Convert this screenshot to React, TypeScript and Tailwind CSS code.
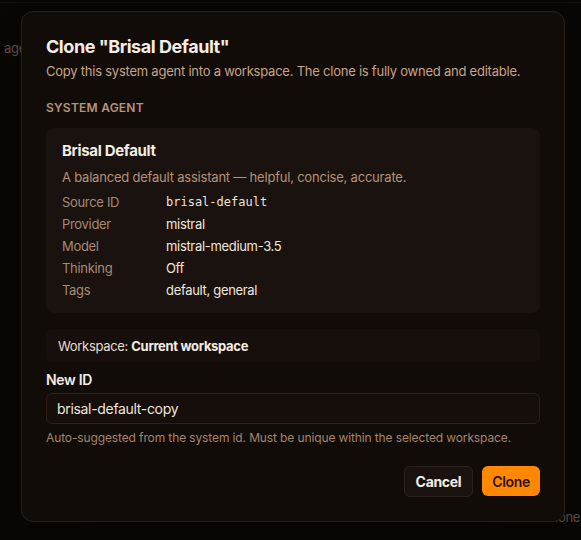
import React from "react";

const rows: { label: string; value: string; mono?: boolean }[] = [
  { label: "Source ID", value: "brisal-default", mono: true },
  { label: "Provider", value: "mistral" },
  { label: "Model", value: "mistral-medium-3.5" },
  { label: "Thinking", value: "Off" },
  { label: "Tags", value: "default, general" },
];

export default function App() {
  return (
    <div
      className="relative h-[540px] w-[581px] overflow-hidden bg-[#0a0604] tracking-[-0.02em] text-[#efe5db]"
      style={{ fontFamily: "Inter, 'Noto Sans', sans-serif" }}
    >
      {/* page behind the modal */}
      <div className="absolute inset-0">
        <div className="h-[3px] border-b border-[#17110d]" />
        <div className="absolute left-[4px] top-[38px] text-[13px] leading-[20px] text-[#5f4e42]">
          agent
        </div>
        <div className="absolute left-[546px] top-[507px] text-[13px] leading-[20px] text-[#5f4e42]">
          Clone
        </div>
      </div>

      {/* dialog */}
      <div className="absolute left-[21px] top-[11px] w-[544px] rounded-xl border border-[#2a201a] bg-[#120c09] p-6 shadow-2xl">
        <h2 className="text-[18px] font-bold leading-[22px] tracking-[-0.025em] text-[#f5ece3]">
          Clone "Brisal Default"
        </h2>
        <p className="mt-[3px] text-[13px] leading-[20px] tracking-[-0.018em] text-[#c6a488]">
          Copy this system agent into a workspace. The clone is fully owned and editable.
        </p>

        <div className="mt-[19px] text-[12px] font-semibold uppercase leading-[16px] tracking-[0.02em] text-[#b8937a]">
          System agent
        </div>

        <div className="mt-3 rounded-lg bg-[#1a120e] px-4 py-3">
          <div className="text-[15px] font-bold leading-[22px] text-[#f5ece3]">Brisal Default</div>
          <div className="mt-1 text-[13px] leading-[22px] tracking-[-0.016em] text-[#b59279]">
            A balanced default assistant — helpful, concise, accurate.
          </div>
          <div className="mt-[3px] flex flex-col">
            {rows.map((r) => (
              <div key={r.label} className="flex text-[13px] leading-[22px]">
                <div className="w-[104px] shrink-0 text-[#a88a74]">{r.label}</div>
                <div
                  className={r.mono ? "text-[12px] tracking-normal text-[#efe5db]" : "text-[#f1e7dd]"}
                  style={r.mono ? { fontFamily: "'DejaVu Sans Mono', monospace" } : undefined}
                >
                  {r.value}
                </div>
              </div>
            ))}
          </div>
        </div>

        <div className="mt-4 flex h-[33px] items-center rounded-md bg-[#170f0b] px-3 text-[13px] leading-[20px] text-[#e8ddd2]">
          <span>Workspace:&nbsp;</span>
          <span className="font-bold text-[#f5ece3]">Current workspace</span>
        </div>

        <label className="mt-2 block text-[14px] font-semibold leading-[20px] text-[#f5ece3]">New ID</label>
        <div className="mt-[3px] flex h-[31px] items-center rounded-md border border-[#2c2019] bg-[#150e0a] px-2.5 text-[14px] leading-[20px] text-[#f1e7dd]">
          brisal-default-copy
        </div>
        <p className="mt-1.5 text-[12px] leading-[16px] tracking-[-0.01em] text-[#a5856d]">
          Auto-suggested from the system id. Must be unique within the selected workspace.
        </p>

        <div className="mt-5 flex justify-end gap-[9px]">
          <button className="h-[31px] rounded-md border border-[#2d221b] bg-[#1a120e] px-[11px] text-[14px] font-bold text-[#f5ece3]">
            Cancel
          </button>
          <button className="h-[30px] rounded-md bg-[#ff8800] px-[10px] text-[14px] font-semibold text-[#2a1200]">
            Clone
          </button>
        </div>
      </div>
    </div>
  );
}
